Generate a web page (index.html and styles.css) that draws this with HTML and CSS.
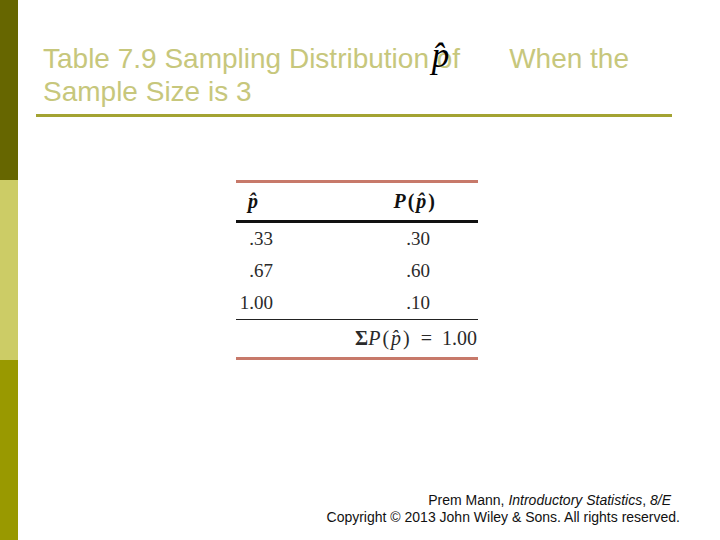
FILE: index.html
```html
<!DOCTYPE html>
<html>
<head>
<meta charset="utf-8">
<link rel="stylesheet" href="styles.css">
</head>
<body>
<div class="slide">
  <div class="sidebar">
    <div class="seg seg-dark"></div>
    <div class="seg seg-light"></div>
    <div class="seg seg-mid"></div>
  </div>
  <div class="main">
    <div class="title">
      <div class="title-line">Table 7.9 Sampling Distribution <span class="of-wrap">of<span class="phat-title">p&#770;</span></span><span class="gap"></span>When the</div>
      <div class="title-line">Sample Size is 3</div>
    </div>
    <div class="rule"></div>
    <div class="table">
      <div class="row head">
        <div class="c1"><span class="bi">p&#770;</span></div>
        <div class="c2"><span class="bi">P</span><span class="b paren">(</span><span class="bi">p&#770;</span><span class="b paren">)</span></div>
      </div>
      <div class="row first">
        <div class="c1">.33</div>
        <div class="c2">.30</div>
      </div>
      <div class="row">
        <div class="c1">.67</div>
        <div class="c2">.60</div>
      </div>
      <div class="row last">
        <div class="c1">1.00</div>
        <div class="c2">.10</div>
      </div>
      <div class="row sum">
        <div class="sum-cell"><span class="b">&Sigma;</span><span class="i">P</span><span class="paren">(</span><span class="i">p&#770;</span><span class="paren">)</span><span class="eq">=</span>1.00</div>
      </div>
    </div>
    <div class="footer">
      <div class="foot-line first-line">Prem Mann, <i>Introductory Statistics</i>, <i>8/E</i></div>
      <div class="foot-line">Copyright &copy; 2013 John Wiley &amp; Sons. All rights reserved.</div>
    </div>
  </div>
</div>
</body>
</html>
```
FILE: styles.css
```css
html, body {
  margin: 0;
  padding: 0;
  background: #ffffff;
}
.slide {
  width: 720px;
  height: 540px;
  display: flex;
  overflow: hidden;
}
.sidebar {
  width: 18px;
  display: flex;
  flex-direction: column;
  flex-shrink: 0;
}
.seg { height: 180px; }
.seg-dark { background: #666600; }
.seg-light { background: #cccc66; }
.seg-mid { background: #999900; }

.main {
  flex: 1;
  display: flex;
  flex-direction: column;
}
.title {
  padding: 42px 0 0 25px;
  font-family: "Liberation Sans", Arial, sans-serif;
  font-size: 28px;
  line-height: 33px;
  color: #c7c77c;
  height: 70px;
}
.title-line { white-space: nowrap; }
.of-wrap { position: relative; }
.phat-title {
  position: absolute;
  left: -5px;
  top: -4px;
  font-family: "Liberation Serif", "Times New Roman", serif;
  font-style: italic;
  font-size: 35px;
  color: #000;
  line-height: 33px;
}
.gap { display: inline-block; width: 49px; }
.rule {
  margin: 2px 0 0 18px;
  width: 636px;
  height: 3px;
  background: #a3a332;
}
.table {
  margin: 63px 0 0 218px;
  width: 242px;
  font-family: "Liberation Serif", "Times New Roman", serif;
  font-size: 19px;
  color: #2a2a2a;
  border-top: 3px solid #c7796a;
  border-bottom: 3px solid #c7796a;
}
.row {
  display: flex;
  height: 32px;
  align-items: center;
}
.row.head {
  height: 37px;
  border-bottom: 3px solid #111;
  color: #111;
  font-size: 20px;
}
.row.last { border-bottom: 1px solid #222; }
.row.sum { height: 37px; justify-content: flex-end; font-size: 20px; }
.c1 { width: 37px; text-align: right; }
.row.head .c1 { text-align: left; padding-left: 12px; width: 25px; }
.c2 { width: 157px; text-align: right; }
.row.head .c2 { width: 164px; }
.bi { font-weight: bold; font-style: italic; }
.b { font-weight: bold; }
.i { font-style: italic; }
.paren { margin: 0 2px; }
.eq { margin: 0 10px 0 9px; }
.sum-cell { padding-right: 1px; }

.footer {
  margin-top: auto;
  padding: 0 40px 14px 0;
  font-family: "Liberation Sans", Arial, sans-serif;
  font-size: 14px;
  line-height: 17px;
  color: #111;
  text-align: right;
}
.first-line { margin-right: 9px; }
```
